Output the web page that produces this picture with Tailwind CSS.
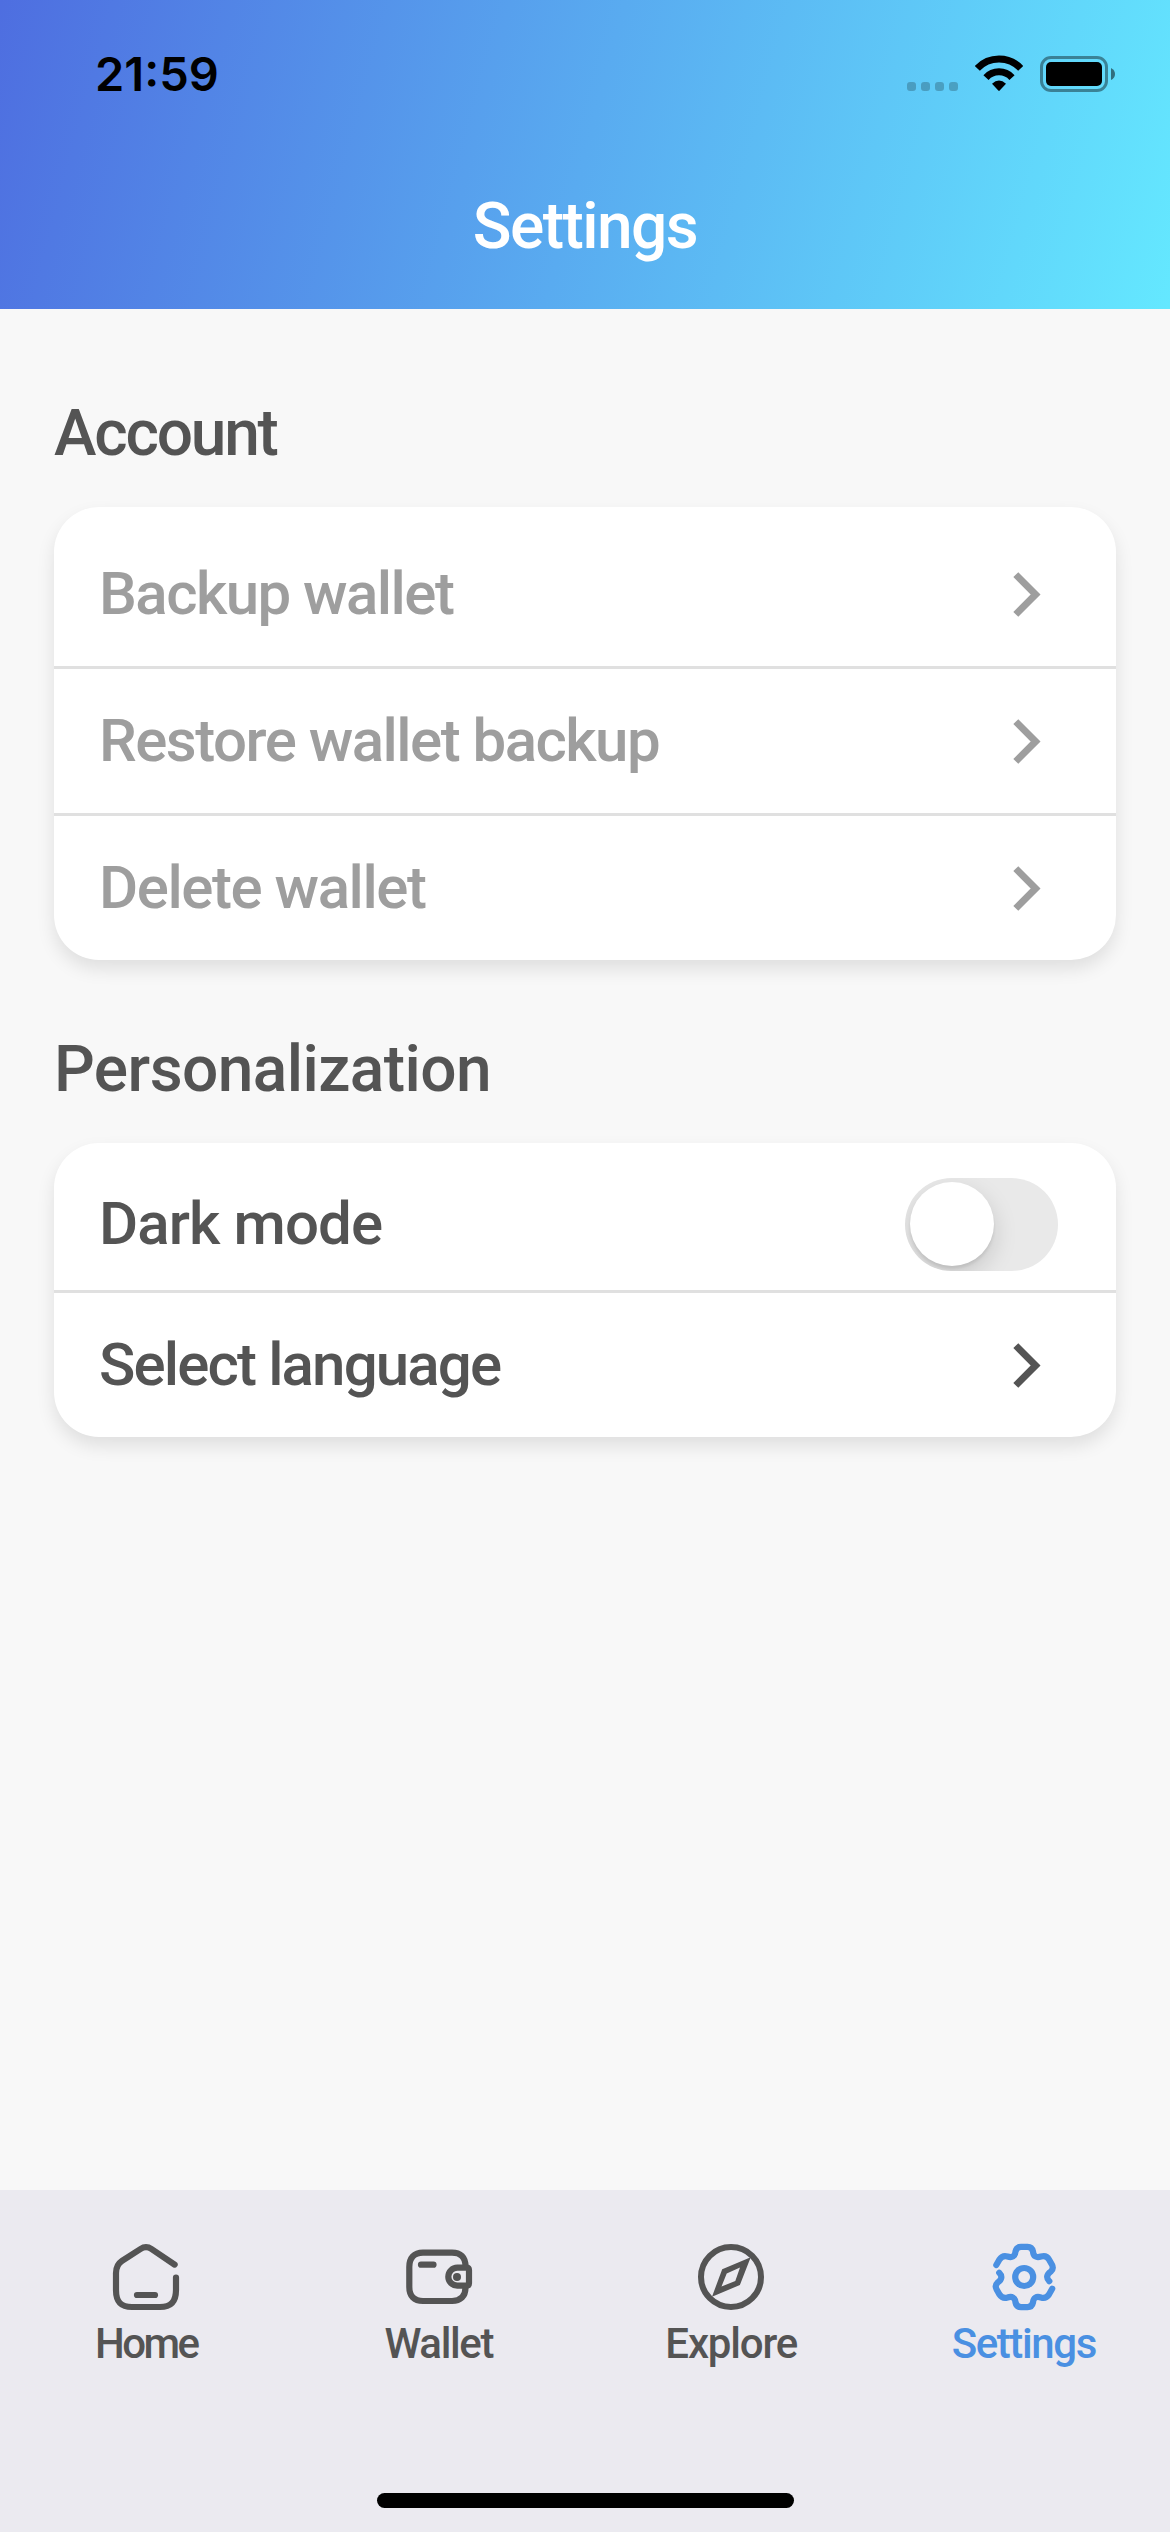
<!DOCTYPE html>
<html lang="en">
<head>
<meta charset="utf-8">
<title>Settings</title>
<script src="https://cdn.jsdelivr.net/npm/@tailwindcss/browser@4"></script>
</head>
<body class="w-[1170px] h-[2532px] overflow-hidden bg-[#f8f8f8] flex flex-col font-[Roboto,sans-serif] font-medium text-[#545454]">
  <header class="h-[309px] shrink-0 pt-[55px] bg-[linear-gradient(104.8deg,#4e6ee0_0%,#59abf0_50%,#64e8ff_100%)]">
    <div class="h-[37px] flex justify-between pl-[95px] pr-[54px] text-black">
      <span class="font-[Inter,sans-serif] font-semibold text-[47px] leading-[37px]">21:59</span>
      <div class="flex gap-[17px]">
        <svg class="w-[51px] h-[37px]" viewBox="0 0 51 37" fill="#000" fill-opacity=".22">
          <rect x="0" y="27" width="9" height="9" rx="3"/><rect x="14" y="27" width="9" height="9" rx="3"/><rect x="28" y="27" width="9" height="9" rx="3"/><rect x="42" y="27" width="9" height="9" rx="3"/>
        </svg>
        <svg class="w-[48px] h-[37px]" viewBox="0 0 48 37" fill="none" stroke="#000" stroke-width="7">
          <path d="M2.3 13.3A29.8 29.8 0 0 1 45.7 13.3"/>
          <path d="M11 22.6A17.6 17.6 0 0 1 37 22.6"/>
          <path d="M17 28.7Q24 22.3 31 28.7L24.7 35.6Q24 36.3 23.3 35.6Z" fill="#000" stroke="none"/>
        </svg>
        <svg class="w-[76px] h-[37px]" viewBox="0 0 76 37">
          <rect x="1.5" y="2.5" width="65" height="33" rx="9.5" fill="none" stroke="#000" stroke-opacity=".4" stroke-width="3"/>
          <rect x="6" y="7" width="56" height="24" rx="5"/>
          <path d="M71 13Q75 15 75 19T71 25Z" fill-opacity=".5"/>
        </svg>
      </div>
    </div>
    <h1 class="mt-[96px] text-center text-white text-[64px] leading-[77px] tracking-[-1.55px]">Settings</h1>
  </header>

  <main class="flex-1 px-[54px] pt-[87px]">
    <h2 class="text-[64px] leading-[76px] tracking-[-2.2px]">Account</h2>
    <section class="mt-[35px] pt-[15px] rounded-[45px] bg-white shadow-[0_9px_18px_rgba(0,0,0,0.1)] text-[60px] text-[#9e9e9e]">
      <div class="h-[147px] border-b-3 border-[#e0e0e0] flex items-center justify-between pl-[45px] pr-[75px]">
        <span class="tracking-[-1.54px]">Backup wallet</span>
        <svg class="w-[28px] h-[45px]" viewBox="0 0 28 45" fill="none" stroke="currentColor" stroke-width="7"><path d="M2.8 2.6L22.6 22.5L2.8 42.4"/></svg>
      </div>
      <div class="h-[147px] border-b-3 border-[#e0e0e0] flex items-center justify-between pl-[45px] pr-[75px]">
        <span class="tracking-[-1.52px]">Restore wallet backup</span>
        <svg class="w-[28px] h-[45px]" viewBox="0 0 28 45" fill="none" stroke="currentColor" stroke-width="7"><path d="M2.8 2.6L22.6 22.5L2.8 42.4"/></svg>
      </div>
      <div class="h-[144px] flex items-center justify-between pl-[45px] pr-[75px]">
        <span class="tracking-[-1.45px]">Delete wallet</span>
        <svg class="w-[28px] h-[45px]" viewBox="0 0 28 45" fill="none" stroke="currentColor" stroke-width="7"><path d="M2.8 2.6L22.6 22.5L2.8 42.4"/></svg>
      </div>
    </section>

    <h2 class="mt-[72px] text-[64px] leading-[76px] tracking-[-0.57px]">Personalization</h2>
    <section class="mt-[35px] pt-[15px] rounded-[45px] bg-white shadow-[0_9px_18px_rgba(0,0,0,0.1)] text-[60px]">
      <div class="h-[135px] border-b-3 border-[#e0e0e0] flex items-center justify-between pl-[45px] pr-[58px]">
        <span class="tracking-[-0.88px]">Dark mode</span>
        <div class="w-[153px] h-[93px] rounded-full bg-[#e9e9e9] overflow-hidden p-[4.5px]">
          <div class="size-[84px] rounded-full bg-white shadow-[0_9px_24px_rgba(0,0,0,0.15),0_3px_3px_rgba(0,0,0,0.08)]"></div>
        </div>
      </div>
      <div class="h-[144px] flex items-center justify-between pl-[45px] pr-[75px]">
        <span class="tracking-[-1.85px]">Select language</span>
        <svg class="w-[28px] h-[45px]" viewBox="0 0 28 45" fill="none" stroke="currentColor" stroke-width="7"><path d="M2.8 2.6L22.6 22.5L2.8 42.4"/></svg>
      </div>
    </section>
  </main>

  <footer class="h-[342px] shrink-0 bg-[#ebeaf0] pt-[51px] flex flex-col">
    <nav class="grid grid-cols-4 text-[42px] leading-[50px]">
      <div class="flex flex-col items-center gap-[6px]">
        <svg class="size-[72px]" viewBox="0 0 72 72" fill="none" stroke="currentColor" stroke-width="6.2" stroke-linecap="round">
          <path d="M64.6 23.6L41.5 8Q36 4.400 30.500 8L12 19.800Q6 23.800 6 32V49C6 61.500 11 66 22 66H50C61 66 66 60.500 66 49V36.500"/>
          <path d="M27 54H45"/>
        </svg>
        <span class="tracking-[-2.5px]">Home</span>
      </div>
      <div class="flex flex-col items-center gap-[6px]">
        <svg class="size-[72px]" viewBox="0 0 72 72" fill="none" stroke="currentColor" stroke-width="6.200" stroke-linecap="round">
          <path d="M62.500 25.500C62.500 16 57.500 11.700 49 11.700H20C11 11.700 6.300 17 6.300 26V46C6.300 55 11 60 20 60H49C57.500 60 62.500 55.500 62.500 46.500"/>
          <path d="M54.300 26.700H63.500Q66 26.700 66 29.200V42.200Q66 44.700 63.500 44.700H54.300A9 9 0 0 1 54.300 26.700Z"/>
          <path d="M18 23.700H30.500"/>
          <circle cx="54" cy="36" r="4" fill="currentColor" stroke="none"/>
        </svg>
        <span class="tracking-[-1.37px]">Wallet</span>
      </div>
      <div class="flex flex-col items-center gap-[6px]">
        <svg class="size-[72px]" viewBox="0 0 72 72" fill="none">
          <circle cx="36" cy="36" r="30" stroke="currentColor" stroke-width="6"/>
          <path fill="currentColor" fill-rule="evenodd" d="M55.700 16.300L44.900 44L17 55.700L27.200 28.300ZM45 26.600L31.700 32.500L26.500 45.500L40.300 40Z"/>
        </svg>
        <span class="tracking-[-1.16px]">Explore</span>
      </div>
      <div class="flex flex-col items-center gap-[6px] text-[#4a90e2]">
        <svg class="size-[72px]" viewBox="0 0 72 72" fill="none" stroke="currentColor" stroke-width="6.200" stroke-linecap="round">
          <circle cx="36.200" cy="36" r="9"/>
          <path d="M8.300 24L11.500 18.500Q14.500 14 19.500 15.500C24 17 27.200 15.500 27.500 10.500Q28.500 5.900 33 5.900H39.500Q44 5.900 45 10.500C45.300 15.500 48.500 17 53 15.500Q58.500 14 61 18.500L64 23.800Q66 27.500 62.800 30.500C58.500 33.500 58 37 61.300 40.200"/>
          <path d="M64.200 47.800L61 53.500Q58 58 53 56.500C48.500 55 45.300 56.500 45 61.500Q44 66.100 39.500 66.100H33Q28.500 66.100 27.500 61.500C27.200 56.500 24 55 19.500 56.500Q14.500 58 11.500 53.500L8.500 48.200Q6.500 44.500 9.700 41.500C14 38.500 14.500 35 11.200 31.800"/>
        </svg>
        <span class="tracking-[-1.4px]">Settings</span>
      </div>
    </nav>
    <div class="mx-auto mt-auto mb-[24px] w-[417px] h-[15px] rounded-full bg-black"></div>
  </footer>
</body>
</html>
